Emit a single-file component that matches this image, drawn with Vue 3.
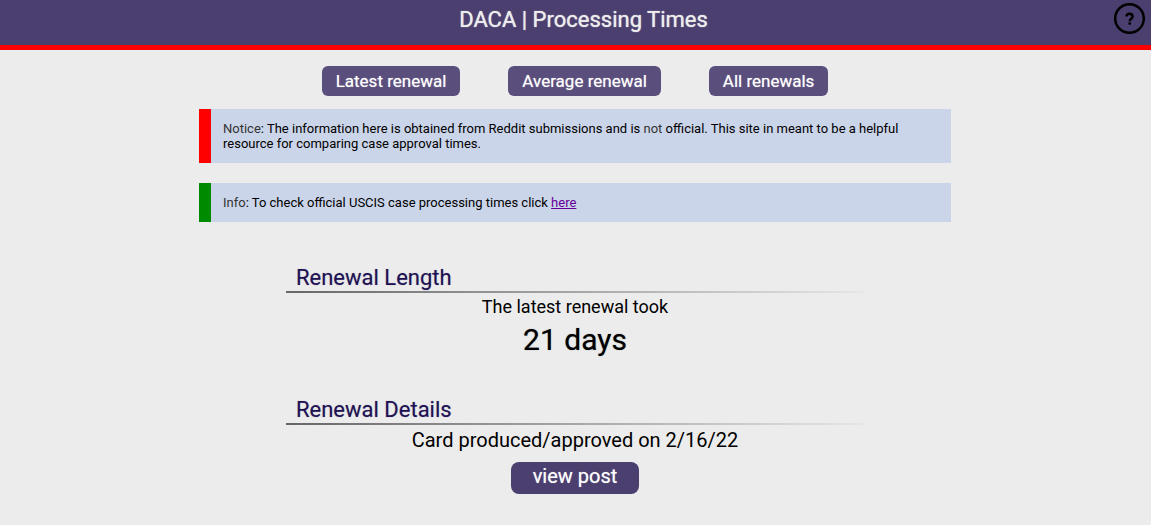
<script setup>
const tabs = ['Latest renewal', 'Average renewal', 'All renewals']
</script>

<template>
  <div class="page">
    <header class="header">
      <h1 class="title">DACA | Processing Times</h1>
      <button class="help" type="button" aria-label="Help">
        <svg viewBox="0 0 32 32" width="32" height="32" aria-hidden="true">
          <circle cx="16.5" cy="15.5" r="14.3" fill="none" stroke="#000" stroke-width="2.5" />
          <path d="M13.4 13.6c0-1.9 1.3-2.9 3.1-2.9s3.1 1 3.1 2.7c0 2.3-2.9 2.4-2.9 4.8" fill="none" stroke="#000" stroke-width="2.4" />
          <circle cx="16.7" cy="20.6" r="1.4" fill="#000" />
        </svg>
      </button>
    </header>

    <main class="main">
      <nav class="tabs">
        <button v-for="tab in tabs" :key="tab" class="tab" type="button">{{ tab }}</button>
      </nav>

      <div class="messages">
        <p class="message notice">
          <span class="soft">Notice</span>: The information here is obtained from Reddit submissions and is
          <span class="soft">not</span> official. This site in meant to be a helpful resource for comparing case approval times.
        </p>
        <p class="message info">
          <span class="soft">Info</span>: To check official USCIS case processing times click <a href="#">here</a>
        </p>
      </div>

      <section class="section">
        <h2 class="heading">Renewal Length</h2>
        <p class="lead">The latest renewal took</p>
        <p class="days">21 days</p>
      </section>

      <section class="section">
        <h2 class="heading">Renewal Details</h2>
        <p class="detail">Card produced/approved on 2/16/22</p>
        <button class="post" type="button">view post</button>
      </section>
    </main>
  </div>
</template>

<style>
body {
  background: #ececec;
}
</style>

<style scoped>
.page {
  font-family: Roboto, "Liberation Sans", sans-serif;
  color: #000;
}

h1,
h2,
p {
  margin: 0;
  font-weight: 400;
}

button {
  border: 0;
  font-family: inherit;
  color: #fff;
  cursor: pointer;
}

.header {
  position: relative;
  padding: 6px 32px 11px 48px;
  border-bottom: 5px solid #f00;
  background: #4a3f6e;
  text-align: center;
}

.title {
  font-size: 22px;
  line-height: 28px;
  color: #ececec;
  text-shadow: 0 0 1px #ececec;
}

.help {
  position: absolute;
  top: 3px;
  right: 6px;
  padding: 0;
  background: none;
}

.help svg {
  display: block;
}

.main {
  display: flex;
  flex-direction: column;
  align-items: center;
  padding-right: 1px;
}

.tabs {
  display: flex;
  gap: 48px;
  margin: 16px 0 13px;
}

.tab {
  padding: 0 14px;
  border-radius: 6px;
  background: #5a4f7c;
  font-size: 17px;
  line-height: 30px;
  text-shadow: 0 0 1px rgba(255, 255, 255, 0.6);
}

.messages {
  box-sizing: border-box;
  width: 100%;
  max-width: 752px;
  margin-bottom: 40px;
}

.message {
  padding: 12px;
  border-left: 12px solid;
  background: #cbd5ea;
  font-size: 13px;
  line-height: 15px;
}

.notice {
  margin-bottom: 20px;
  border-color: #f00;
}

.info {
  border-color: #008a00;
}

.soft {
  color: #333;
}

.message a {
  color: #609;
}

.section {
  width: 100%;
  max-width: 578px;
  margin-bottom: 35px;
  text-align: center;
}

.heading {
  padding: 3px 10px 0;
  border-bottom: 2px solid;
  border-image: linear-gradient(to right, #666, rgba(102, 102, 102, 0.04)) 1;
  font-size: 22px;
  line-height: 26px;
  text-align: left;
  color: #1f1253;
  text-shadow: 0 0 1px rgba(31, 18, 83, 0.4);
}

.lead {
  font-size: 18px;
  line-height: 27px;
}

.days {
  font-size: 30px;
  line-height: 39px;
  text-shadow: 0 0 1px rgba(0, 0, 0, 0.6);
}

.detail {
  margin-bottom: 6px;
  font-size: 20px;
  line-height: 31px;
}

.post {
  padding: 0 22px 4px;
  border-radius: 8px;
  background: #4a3f6e;
  font-size: 20px;
  line-height: 28px;
  text-shadow: 0 0 1px rgba(255, 255, 255, 0.6);
}
</style>
